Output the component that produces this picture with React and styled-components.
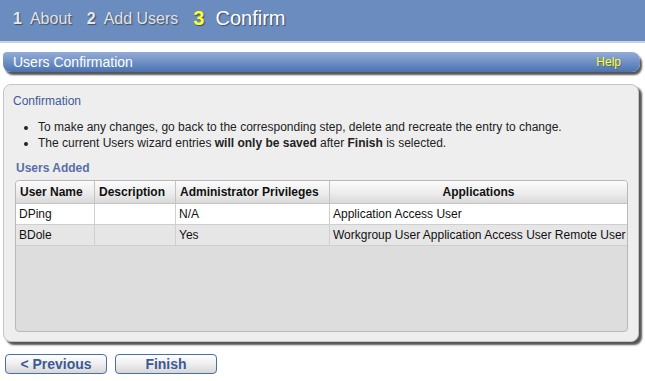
import React from 'react'
import styled, { createGlobalStyle } from 'styled-components'

const GlobalStyle = createGlobalStyle`
    html, body {
        margin: 0;
        padding: 0;
        background: #ffffff;
        font-family: "Liberation Sans", Arial, sans-serif;
    }
`

const Page = styled.div`
    width: 645px;
    height: 381px;
    overflow: hidden;
    background: #ffffff;
`

const Steps = styled.div`
    height: 43px;
    background-color: #6a8cbf;
    border-bottom: 2px solid #c9d3e0;
    display: flex;
    align-items: center;
    padding: 0 0 4px 13px;
    box-sizing: border-box;
    gap: 15px;
`

const Step = styled.div`
    display: flex;
    align-items: baseline;
    gap: ${({ active }) => (active ? '11px' : '8px')};
    color: ${({ active }) => (active ? '#ffffff' : '#e2e2e2')};
    font-size: ${({ active }) => (active ? '20px' : '16px')};
    text-shadow: 1px 1px 1px rgba(40, 50, 70, 0.7);
`

const StepNum = styled.span`
    font-weight: bold;
    color: ${({ active }) => (active ? '#ffff33' : '#e8e8e8')};
`

const TitleBar = styled.div`
    margin: 9px 5px 0 3px;
    height: 20px;
    border-radius: 4px 8px 8px 8px;
    background: linear-gradient(to bottom, #93acd6 0%, #6f90c5 50%, #4b72b0 100%);
    box-shadow: 2px 3px 2px #555555;
    display: flex;
    align-items: center;
    justify-content: space-between;
    padding: 0 19px 0 10px;
`

const Title = styled.span`
    color: #ffffff;
    font-size: 14px;
`

const Help = styled.span`
    color: #ffff33;
    font-size: 12px;
    text-shadow: 1px 1px 0 rgba(70, 80, 40, 0.5);
`

const Panel = styled.div`
    margin: 12px 6px 0 3px;
    height: 258px;
    background: #eeeeee;
    border: 1px solid #c4c4c4;
    border-radius: 8px;
    box-shadow: 3px 3px 2px #555555;
    padding: 9px 10px 0 9px;
    box-sizing: border-box;
`

const SectionLabel = styled.div`
    color: #3f5b98;
    font-size: 12px;
`

const Notes = styled.ul`
    margin: 11px 0 0 0;
    padding: 0 0 0 25px;
    font-size: 12px;
    color: #222222;
    line-height: 16px;
`

const TableTitle = styled.div`
    margin: 10px 0 0 3px;
    color: #5a6ea8;
    font-size: 12px;
    font-weight: bold;
`

const TableBox = styled.div`
    margin: 5px 0 0 2px;
    height: 150px;
    background: #dddddd;
    border: 1px solid #b8b8b8;
    border-radius: 4px;
    overflow: hidden;
`

const Table = styled.table`
    width: 100%;
    table-layout: fixed;
    border-collapse: collapse;
    font-size: 12px;
    color: #111111;
`

const Th = styled.th`
    height: 22px;
    padding: 0 4px;
    font-weight: bold;
    white-space: nowrap;
    text-align: ${({ center }) => (center ? 'center' : 'left')};
    background: linear-gradient(to bottom, #fbfbfb 0%, #ececec 55%, #d9d9d9 100%);
    border-right: 1px solid #c4c4c4;
    border-bottom: 1px solid #c4c4c4;
    width: ${({ w }) => w};
    &:last-child {
        border-right: none;
    }
`

const Tr = styled.tr`
    background: ${({ alt }) => (alt ? '#e6e6e6' : '#ffffff')};
`

const Td = styled.td`
    height: 20px;
    padding: 0 3px;
    border-right: 1px solid #cfcfcf;
    border-bottom: 1px solid #cfcfcf;
    white-space: nowrap;
    &:last-child {
        border-right: none;
    }
`

const Buttons = styled.div`
    display: flex;
    gap: 8px;
    margin: 12px 0 0 5px;
`

const Button = styled.button`
    width: 102px;
    height: 20px;
    padding: 0;
    border: 1px solid #4a6fa5;
    border-radius: 4px;
    background: linear-gradient(to bottom, #ffffff 0%, #eeeeee 50%, #d6d6d6 100%);
    color: #3c5a96;
    font-family: "Liberation Sans", Arial, sans-serif;
    font-size: 14px;
    font-weight: bold;
    line-height: 18px;
    cursor: pointer;
`

const users = [
    { name: 'DPing', description: '', admin: 'N/A', apps: 'Application Access User' },
    { name: 'BDole', description: '', admin: 'Yes', apps: 'Workgroup User Application Access User Remote User' },
]

const App = () => {
    return (
        <Page>
            <GlobalStyle />
            <Steps>
                <Step><StepNum>1</StepNum>About</Step>
                <Step><StepNum>2</StepNum>Add Users</Step>
                <Step active><StepNum active>3</StepNum>Confirm</Step>
            </Steps>

            <TitleBar>
                <Title>Users Confirmation</Title>
                <Help>Help</Help>
            </TitleBar>

            <Panel>
                <SectionLabel>Confirmation</SectionLabel>
                <Notes>
                    <li>To make any changes, go back to the corresponding step, delete and recreate the entry to change.</li>
                    <li>The current Users wizard entries <b>will only be saved</b> after <b>Finish</b> is selected.</li>
                </Notes>
                <TableTitle>Users Added</TableTitle>
                <TableBox>
                    <Table>
                        <thead>
                            <tr>
                                <Th w="70px">User Name</Th>
                                <Th w="72px">Description</Th>
                                <Th w="145px">Administrator Privileges</Th>
                                <Th center>Applications</Th>
                            </tr>
                        </thead>
                        <tbody>
                            {users.map((u, i) => (
                                <Tr key={u.name} alt={i % 2 === 1}>
                                    <Td>{u.name}</Td>
                                    <Td>{u.description}</Td>
                                    <Td>{u.admin}</Td>
                                    <Td>{u.apps}</Td>
                                </Tr>
                            ))}
                        </tbody>
                    </Table>
                </TableBox>
            </Panel>

            <Buttons>
                <Button>&lt; Previous</Button>
                <Button>Finish</Button>
            </Buttons>
        </Page>
    )
}

export default App
